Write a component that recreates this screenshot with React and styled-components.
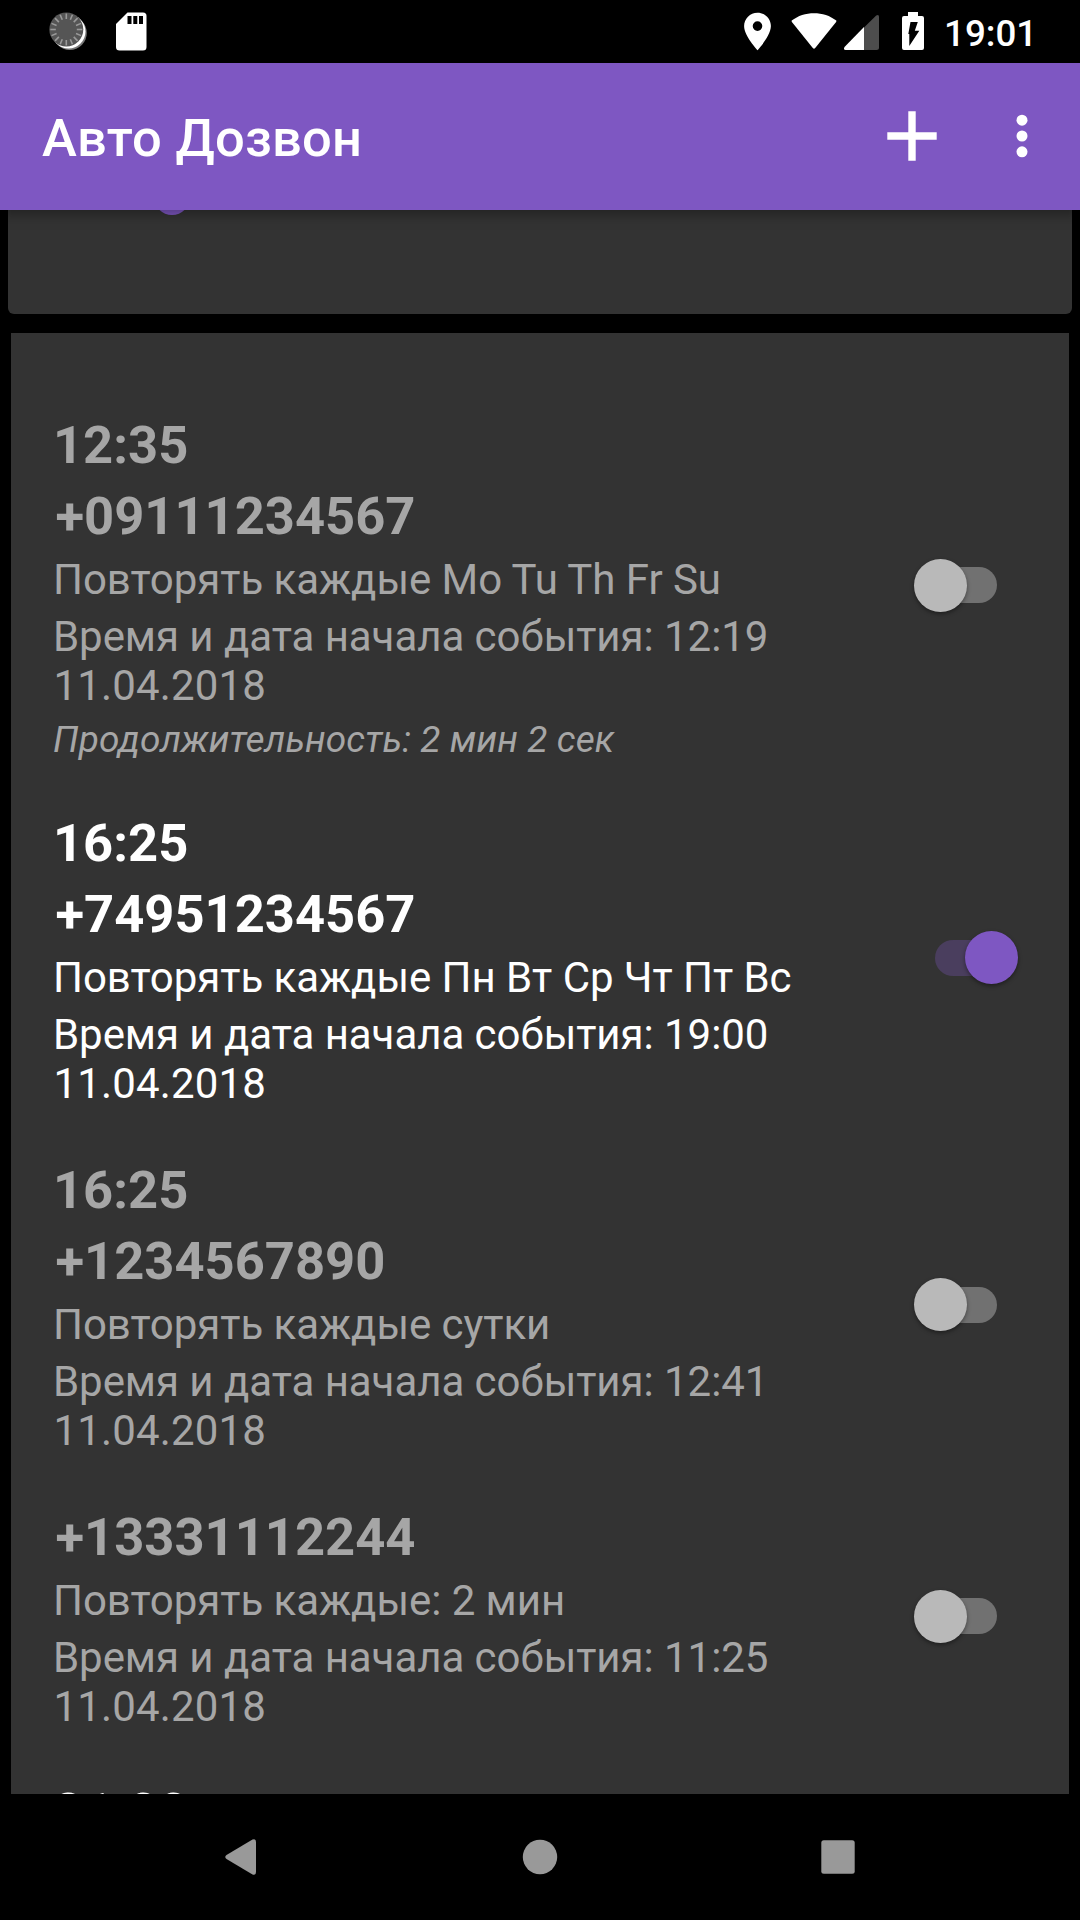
import React, { useState } from "react";
import styled, { createGlobalStyle, css } from "styled-components";

const GlobalStyle = createGlobalStyle`
  * {
    box-sizing: border-box;
  }
  body {
    margin: 0;
    background: #000000;
    font-family: Roboto, "Noto Sans", sans-serif;
  }
`;

const Screen = styled.div`
  display: flex;
  flex-direction: column;
  width: 1080px;
  height: 1920px;
  overflow: hidden;
  background: #000000;
`;

const StatusBar = styled.header`
  display: flex;
  flex: none;
  align-items: flex-start;
  justify-content: space-between;
  height: 63px;
  color: #ffffff;
`;

const StatusGroup = styled.div`
  display: flex;
  align-items: flex-start;
`;

const StatusIcons = styled.svg`
  display: block;
  height: 63px;
`;

const Clock = styled.span`
  width: 140px;
  padding: 12px 0 0 4px;
  font-size: 36.75px;
  font-weight: 500;
  line-height: 43px;
`;

const AppBar = styled.div`
  display: flex;
  flex: none;
  align-items: center;
  justify-content: space-between;
  height: 147px;
  padding-left: 42px;
  background: #7e57c2;
  box-shadow: 0 3px 14px rgba(0, 0, 0, 0.4);
  z-index: 1;
`;

const Title = styled.h1`
  margin: 3px 0 0;
  color: #ffffff;
  font-size: 52.5px;
  font-weight: 500;
  letter-spacing: 0.22px;
  line-height: 62px;
`;

const Actions = styled.div`
  display: flex;
`;

const IconButton = styled.button`
  display: flex;
  align-items: center;
  justify-content: center;
  width: ${(props) => props.$width}px;
  height: 147px;
  padding: 0 1px 1px 0;
  border: none;
  background: none;
  cursor: pointer;
`;

const Content = styled.main`
  display: flex;
  flex: 1;
  flex-direction: column;
  gap: 19px;
  min-height: 0;
  overflow: hidden;
`;

const SettingsCard = styled.section`
  flex: none;
  height: 104px;
  margin: 0 8px;
  padding-left: 145.5px;
  border-radius: 0 0 6px 6px;
  background: #333333;
  overflow: hidden;
`;

const SliderThumb = styled.div`
  width: 36px;
  height: 36px;
  margin-top: -31px;
  border-radius: 50%;
  background: #7e57c2;
`;

const EventList = styled.section`
  flex: 1;
  min-height: 0;
  margin: 0 11px;
  padding-top: 56px;
  background: #333333;
  overflow: hidden;
`;

const Event = styled.article`
  display: flex;
  align-items: center;
  justify-content: space-between;
  padding: 24px 51px 18px 42px;
  color: ${(props) => (props.$active ? "#ffffff" : "#a6a6a6")};

  &:last-child {
    padding-top: 23px;
  }
`;

const Details = styled.div`
  display: flex;
  flex-direction: column;
  width: 770px;
`;

const Time = styled.div`
  height: 71px;
  padding-top: 1px;
  font-size: 52.5px;
  font-weight: 700;
  line-height: 62px;
`;

const Phone = styled(Time)`
  padding-left: 2.5px;
`;

const Line = styled.div`
  font-size: 42px;
  letter-spacing: -0.05px;
  line-height: 49px;
`;

const Repeat = styled(Line)`
  padding-bottom: 8px;
`;

const StartDate = styled(Line)`
  padding: 0 0 8px 0.5px;
  letter-spacing: 0.16px;
`;

const Duration = styled.div`
  height: 51px;
  font-size: 37px;
  font-style: italic;
  letter-spacing: 0.1px;
  line-height: 43px;
`;

const SwitchButton = styled.button`
  display: flex;
  align-items: center;
  width: 104px;
  height: 53px;
  margin-bottom: 12px;
  padding: 0 21px;
  border: none;
  background: none;
  cursor: pointer;
`;

const Track = styled.span`
  display: flex;
  align-items: center;
  width: 62px;
  height: 36px;
  border-radius: 18px;
  background: #717171;

  ${(props) =>
    props.$on &&
    css`
      background: #4a3e5e;
    `}
`;

const Thumb = styled.span`
  flex: none;
  width: 53px;
  height: 53px;
  margin-left: ${(props) => (props.$on ? "30px" : "-21px")};
  border-radius: 50%;
  background: ${(props) => (props.$on ? "#7e57c2" : "#b9b9b9")};
  box-shadow: 0 2px 4px rgba(0, 0, 0, 0.4);
`;

const NavBar = styled.nav`
  display: flex;
  flex: none;
  align-items: center;
  justify-content: center;
  height: 126px;
  padding-right: 1px;
  background: #000000;
`;

const NavButton = styled.button`
  display: flex;
  align-items: center;
  justify-content: center;
  width: 298.5px;
  height: 126px;
  padding: 0;
  border: none;
  background: none;
`;

const events = [
  {
    time: "12:35",
    phone: "+09111234567",
    repeat: "Повторять каждые Mo Tu Th Fr Su",
    startTime: "12:19",
    startDate: "11.04.2018",
    duration: "Продолжительность: 2 мин 2 сек",
  },
  {
    time: "16:25",
    phone: "+74951234567",
    repeat: "Повторять каждые Пн Вт Ср Чт Пт Вс",
    startTime: "19:00",
    startDate: "11.04.2018",
    active: true,
  },
  {
    time: "16:25",
    phone: "+1234567890",
    repeat: "Повторять каждые сутки",
    startTime: "12:41",
    startDate: "11.04.2018",
  },
  {
    phone: "+13331112244",
    repeat: "Повторять каждые: 2 мин",
    startTime: "11:25",
    startDate: "11.04.2018",
  },
  { time: "21:00", active: true },
];

const spokes = Array.from({ length: 16 }, (_, i) => i * 22.5);

const Notifications = () => (
  <StatusIcons width="160" viewBox="0 0 160 63">
    <circle cx="69.8" cy="33" r="17" fill="#777777" />
    <circle cx="68.5" cy="31.5" r="17" fill="#ffffff" />
    <circle cx="66.3" cy="29.5" r="17" fill="#555555" />
    {spokes.map((angle) => (
      <path
        key={angle}
        d="M66.3 13.5v5.5"
        stroke="#999999"
        strokeWidth="1.6"
        transform={`rotate(${angle} 66.3 29.5)`}
      />
    ))}
    <path
      d="M127.5 12.5h15.5a3.5 3.5 0 0 1 3.5 3.5v31a3.5 3.5 0 0 1-3.5 3.5h-23.5a3.5 3.5 0 0 1-3.5-3.5V24z"
      fill="#ffffff"
    />
    <path d="M127.5 16h4v8h-4zM133.3 16h4v8h-4zM139 16h4v8h-4z" fill="#000000" />
  </StatusIcons>
);

const SystemIcons = () => (
  <StatusIcons width="200" viewBox="740 0 200 63">
    <path
      d="M757.5 12.7c-7.5 0-13.4 6-13.4 13.4 0 9.9 13.4 24.1 13.4 24.1s13.4-14.2 13.4-24.1c0-7.4-5.9-13.4-13.4-13.4zm0 18.2a4.8 4.8 0 1 1 0-9.6 4.8 4.8 0 0 1 0 9.6z"
      fill="#ffffff"
    />
    <path
      d="M791.7 20.5C804 10.7 824 10.7 836.3 20.5q.3.7-.2 1.5L815 48.3q-1 .9-2 0L791.9 22q-.5-.8-.2-1.5z"
      fill="#ffffff"
    />
    <path
      d="M864 27.5L876.2 15.6q2.8-1.7 2.8 1.4v30.5q0 2.5-2.5 2.5H864z"
      fill="#4d4d4d"
    />
    <path d="M864 27v23h-18.5q-2.5-.5-1-3z" fill="#ffffff" />
    <path
      d="M908 12h10v4h4a2 2 0 0 1 2 2v30a2 2 0 0 1-2 2h-18a2 2 0 0 1-2-2V18a2 2 0 0 1 2-2h4z"
      fill="#ffffff"
    />
    <path d="M910.5 22h7.3l-3 8.8h4.5L909.3 46v-12h-1z" fill="#000000" />
  </StatusIcons>
);

const Switch = ({ initial }) => {
  const [on, setOn] = useState(initial);

  return (
    <SwitchButton role="switch" aria-checked={on} onClick={() => setOn(!on)}>
      <Track $on={on}>
        <Thumb $on={on} />
      </Track>
    </SwitchButton>
  );
};

const EventRow = ({ event }) => (
  <Event $active={event.active}>
    <Details>
      {event.time && <Time>{event.time}</Time>}
      {event.phone && <Phone>{event.phone}</Phone>}
      {event.repeat && <Repeat>{event.repeat}</Repeat>}
      {event.startTime && (
        <>
          <Line>{`Время и дата начала события: ${event.startTime}`}</Line>
          <StartDate>{event.startDate}</StartDate>
        </>
      )}
      {event.duration && <Duration>{event.duration}</Duration>}
    </Details>
    {event.phone && <Switch initial={Boolean(event.active)} />}
  </Event>
);

const App = () => {
  return (
    <>
      <GlobalStyle />
      <Screen>
        <StatusBar>
          <Notifications />
          <StatusGroup>
            <SystemIcons />
            <Clock>19:01</Clock>
          </StatusGroup>
        </StatusBar>
        <AppBar>
          <Title>Авто Дозвон</Title>
          <Actions>
            <IconButton $width={105} aria-label="add">
              <svg width="50" height="50" viewBox="0 0 50 50">
                <path d="M21.3 0.3h7.4v21h21v7.4h-21v21h-7.4v-21h-21v-7.4h21z" fill="#ffffff" />
              </svg>
            </IconButton>
            <IconButton $width={115} aria-label="menu">
              <svg width="12" height="44" viewBox="0 0 12 44">
                <circle cx="6" cy="6.2" r="5.5" fill="#ffffff" />
                <circle cx="6" cy="22" r="5.5" fill="#ffffff" />
                <circle cx="6" cy="37.8" r="5.5" fill="#ffffff" />
              </svg>
            </IconButton>
          </Actions>
        </AppBar>
        <Content>
          <SettingsCard>
            <SliderThumb />
          </SettingsCard>
          <EventList>
            {events.map((event, i) => (
              <EventRow key={i} event={event} />
            ))}
          </EventList>
        </Content>
        <NavBar>
          <NavButton aria-label="back">
            <svg width="32" height="36" viewBox="0 0 32 36">
              <path d="M1.5 16L27.5 0.6q3.5-1.5 3.5 2.4v30q0 3.9-3.5 2.4L1.5 20q-2.5-2 0-4z" fill="#999999" />
            </svg>
          </NavButton>
          <NavButton aria-label="home">
            <svg width="36" height="36" viewBox="0 0 36 36">
              <circle cx="18" cy="18" r="17.2" fill="#999999" />
            </svg>
          </NavButton>
          <NavButton aria-label="recents">
            <svg width="34" height="34" viewBox="0 0 34 34">
              <rect x="0.3" y="0.3" width="33.4" height="33.4" rx="2.5" fill="#999999" />
            </svg>
          </NavButton>
        </NavBar>
      </Screen>
    </>
  );
};

export default App;
